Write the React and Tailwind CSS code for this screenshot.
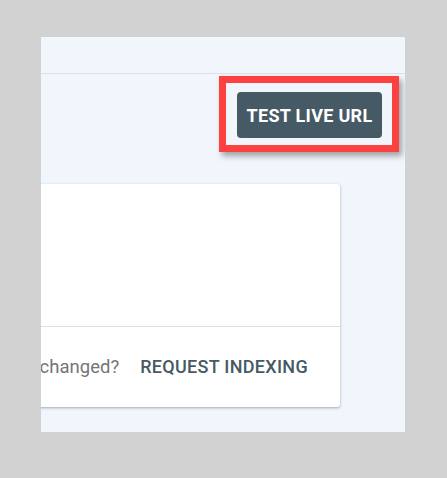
export default function App() {
    return (
        <div className="w-[447px] h-[478px] bg-[#d2d2d2] pt-[37px] pl-[41px]" style={{ fontFamily: 'Roboto, "Liberation Sans", sans-serif' }}>
            <div className="w-[364px] h-[395px] bg-[#f1f5fc] overflow-hidden flex flex-col">
                {/* header strip */}
                <div className="h-[37px] shrink-0 border-b border-[#dcdfe4]" />

                {/* toolbar */}
                <div className="flex justify-end pr-[6px] pt-[2px]">
                    <div className="border-[7px] border-[#fc4141] pl-[11px] pr-[10px] pt-[9px] pb-[7px] shadow-[3px_4px_6px_rgba(0,0,0,0.35)]">
                        <button className="w-[145px] h-[46px] rounded-[4px] bg-[#455a64] text-white text-[18px] font-bold tracking-[0.3px]">
                            TEST LIVE URL
                        </button>
                    </div>
                </div>

                {/* card */}
                <div className="mt-[32px] -ml-[200px] w-[499px] bg-white rounded-[3px] shadow-[0_1px_3px_rgba(60,64,67,0.3),0_1px_2px_rgba(60,64,67,0.15)] shrink-0">
                    <div className="h-[143px] border-b border-[#e0e0e0]" />
                    <div className="h-[80px] flex items-center justify-end pr-[32px]">
                        <div className="flex items-baseline">
                            <span className="text-[18.5px] text-[#757575] whitespace-nowrap">changed?</span>
                            <span className="ml-[21px] text-[18px] font-medium text-[#455a64] tracking-[0.3px] whitespace-nowrap">REQUEST INDEXING</span>
                        </div>
                    </div>
                </div>
            </div>
        </div>
    );
}
